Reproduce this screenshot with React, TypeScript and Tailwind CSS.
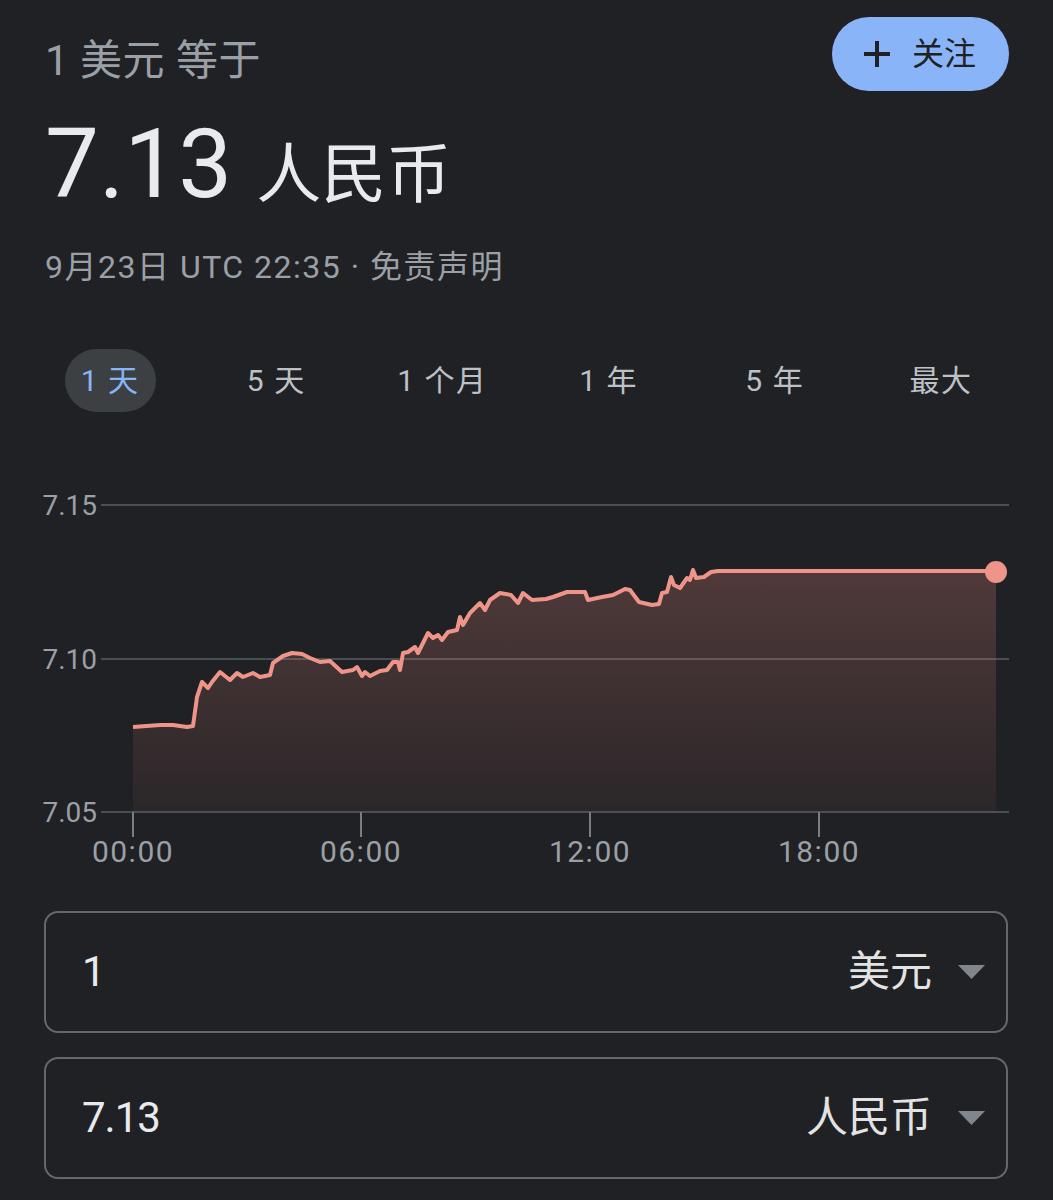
import React from "react";

const points: [number, number][] = [
  [133, 727], [160, 725], [173, 725], [187, 727], [193, 726], [197, 697], [202, 682],
  [208, 688], [212, 682], [220, 672], [230, 680], [237, 673], [243, 677], [253, 673],
  [260, 677], [270, 675], [273, 663], [283, 656], [292, 653], [302, 654], [310, 658],
  [320, 662], [330, 661], [342, 672], [353, 670], [357, 667], [362, 676], [365, 672],
  [370, 676], [380, 671], [387, 670], [393, 662], [398, 662], [400, 670], [403, 653],
  [408, 652], [415, 647], [418, 653], [428, 633], [433, 638], [438, 635], [442, 640],
  [448, 632], [457, 630], [460, 617], [463, 625], [470, 613], [480, 603], [485, 610],
  [490, 600], [500, 593], [511, 595], [518, 603], [523, 593], [532, 600], [546, 599],
  [553, 597], [567, 592], [585, 592], [588, 600], [602, 597], [613, 595], [625, 589],
  [630, 590], [639, 602], [652, 605], [659, 604], [662, 593], [667, 592], [671, 577],
  [674, 585], [680, 588], [687, 578], [690, 580], [693, 570], [696, 578], [704, 577],
  [711, 572], [718, 571], [996, 571],
];

const tabs = ["1 天", "5 天", "1 个月", "1 年", "5 年", "最大"];

const yLabels = [
  { label: "7.15", line: 505, base: 515 },
  { label: "7.10", line: 659, base: 669 },
  { label: "7.05", line: 812, base: 822 },
];

const xTicks = [
  { label: "00:00", x: 133 },
  { label: "06:00", x: 361 },
  { label: "12:00", x: 590 },
  { label: "18:00", x: 819 },
];

function Chart() {
  const line = points.map(([x, y], i) => `${i ? "L" : "M"}${x} ${y}`).join(" ");
  const area = `${line} L996 812 L133 812 Z`;
  return (
    <svg width="1053" height="400" viewBox="0 480 1053 400" className="block">
      <defs>
        <linearGradient id="fill" x1="0" y1="0" x2="0" y2="1">
          <stop offset="0%" stopColor="#f28b82" stopOpacity="0.23" />
          <stop offset="100%" stopColor="#f28b82" stopOpacity="0.05" />
        </linearGradient>
      </defs>
      {yLabels.map((l) => (
        <g key={l.label}>
          <line x1="101" x2="1009" y1={l.line} y2={l.line} stroke="#4a4d51" strokeWidth="2" />
          <text
            x="97"
            y={l.base}
            textAnchor="end"
            fill="#9aa0a6"
            fontSize="28"
            fontFamily="Roboto, sans-serif"
          >
            {l.label}
          </text>
        </g>
      ))}
      <path d={area} fill="url(#fill)" />
      <path d={line} fill="none" stroke="#ee9488" strokeWidth="4" strokeLinejoin="round" />
      <circle cx="996" cy="572" r="11" fill="#ee9488" />
      {xTicks.map((t) => (
        <g key={t.label}>
          <line x1={t.x} x2={t.x} y1="812" y2="837" stroke="#7a7d81" strokeWidth="2" />
          <text
            x={t.x}
            y="862"
            textAnchor="middle"
            fill="#9aa0a6"
            fontSize="30"
            letterSpacing="1.5"
            fontFamily="Roboto, sans-serif"
          >
            {t.label}
          </text>
        </g>
      ))}
    </svg>
  );
}

function Converter({ value, unit, top }: { value: string; unit: string; top: string }) {
  return (
    <div
      className={`${top} ml-[44px] flex h-[122px] w-[964px] items-center rounded-[14px] border-2 border-[#64676b] pl-[36px] pr-[21px]`}
    >
      <span className="flex-1 text-[42px] leading-none tracking-[-1px] text-[#e8eaed]">{value}</span>
      <span className="text-[42px] leading-none text-[#e3e3e3]">{unit}</span>
      <svg width="27" height="14" viewBox="0 0 27 14" className="ml-[26px]">
        <path d="M0 0 L27 0 L13.5 14 Z" fill="#80868b" />
      </svg>
    </div>
  );
}

export default function App() {
  return (
    <div className="min-h-[1200px] w-[1053px] overflow-hidden bg-[#202124] font-['Roboto','Noto_Sans_CJK_SC',sans-serif]">
      <div className="flex items-start justify-between pl-[45px] pr-[44px] pt-[17px]">
        <div className="pt-[20px] text-[42px] leading-[48px] tracking-[0.5px] text-[#9aa0a6]">1 美元 等于</div>
        <button className="flex h-[74px] w-[177px] items-center rounded-full bg-[#8ab4f8] pl-[30px] text-[#202124]">
          <svg width="30" height="30" viewBox="0 0 30 30">
            <path d="M15 2 V28 M2 15 H28" stroke="#202124" strokeWidth="4" />
          </svg>
          <span className="ml-[20px] text-[32px] leading-none">关注</span>
        </button>
      </div>

      <div className="mt-[25px] flex h-[96px] items-baseline pl-[45px] text-[#e8eaed]">
        <span className="text-[96px] leading-none">7.13</span>
        <span className="ml-[24px] text-[65px] leading-none">人民币</span>
      </div>

      <div className="mt-[37px] pl-[45px] text-[32px] leading-[36px] tracking-[1.5px] text-[#9aa0a6]">
        9月23日 UTC 22:35 · 免责声明
      </div>

      <div className="ml-[27px] mt-[64px] grid h-[63px] w-[997px] grid-cols-6">
        {tabs.map((t, i) => (
          <div key={t} className="flex items-center justify-center">
            {i === 0 ? (
              <span className="flex h-[63px] w-[91px] items-center justify-center rounded-full bg-[#3c4043] text-[30px] tracking-[1.5px] text-[#8ab4f8]">
                {t}
              </span>
            ) : (
              <span className="text-[30px] tracking-[1.5px] text-[#bdc1c6]">{t}</span>
            )}
          </div>
        ))}
      </div>

      <div className="mt-[68px]">
        <Chart />
      </div>

      <Converter value="1" unit="美元" top="mt-[31px]" />
      <Converter value="7.13" unit="人民币" top="mt-[24px]" />
    </div>
  );
}
